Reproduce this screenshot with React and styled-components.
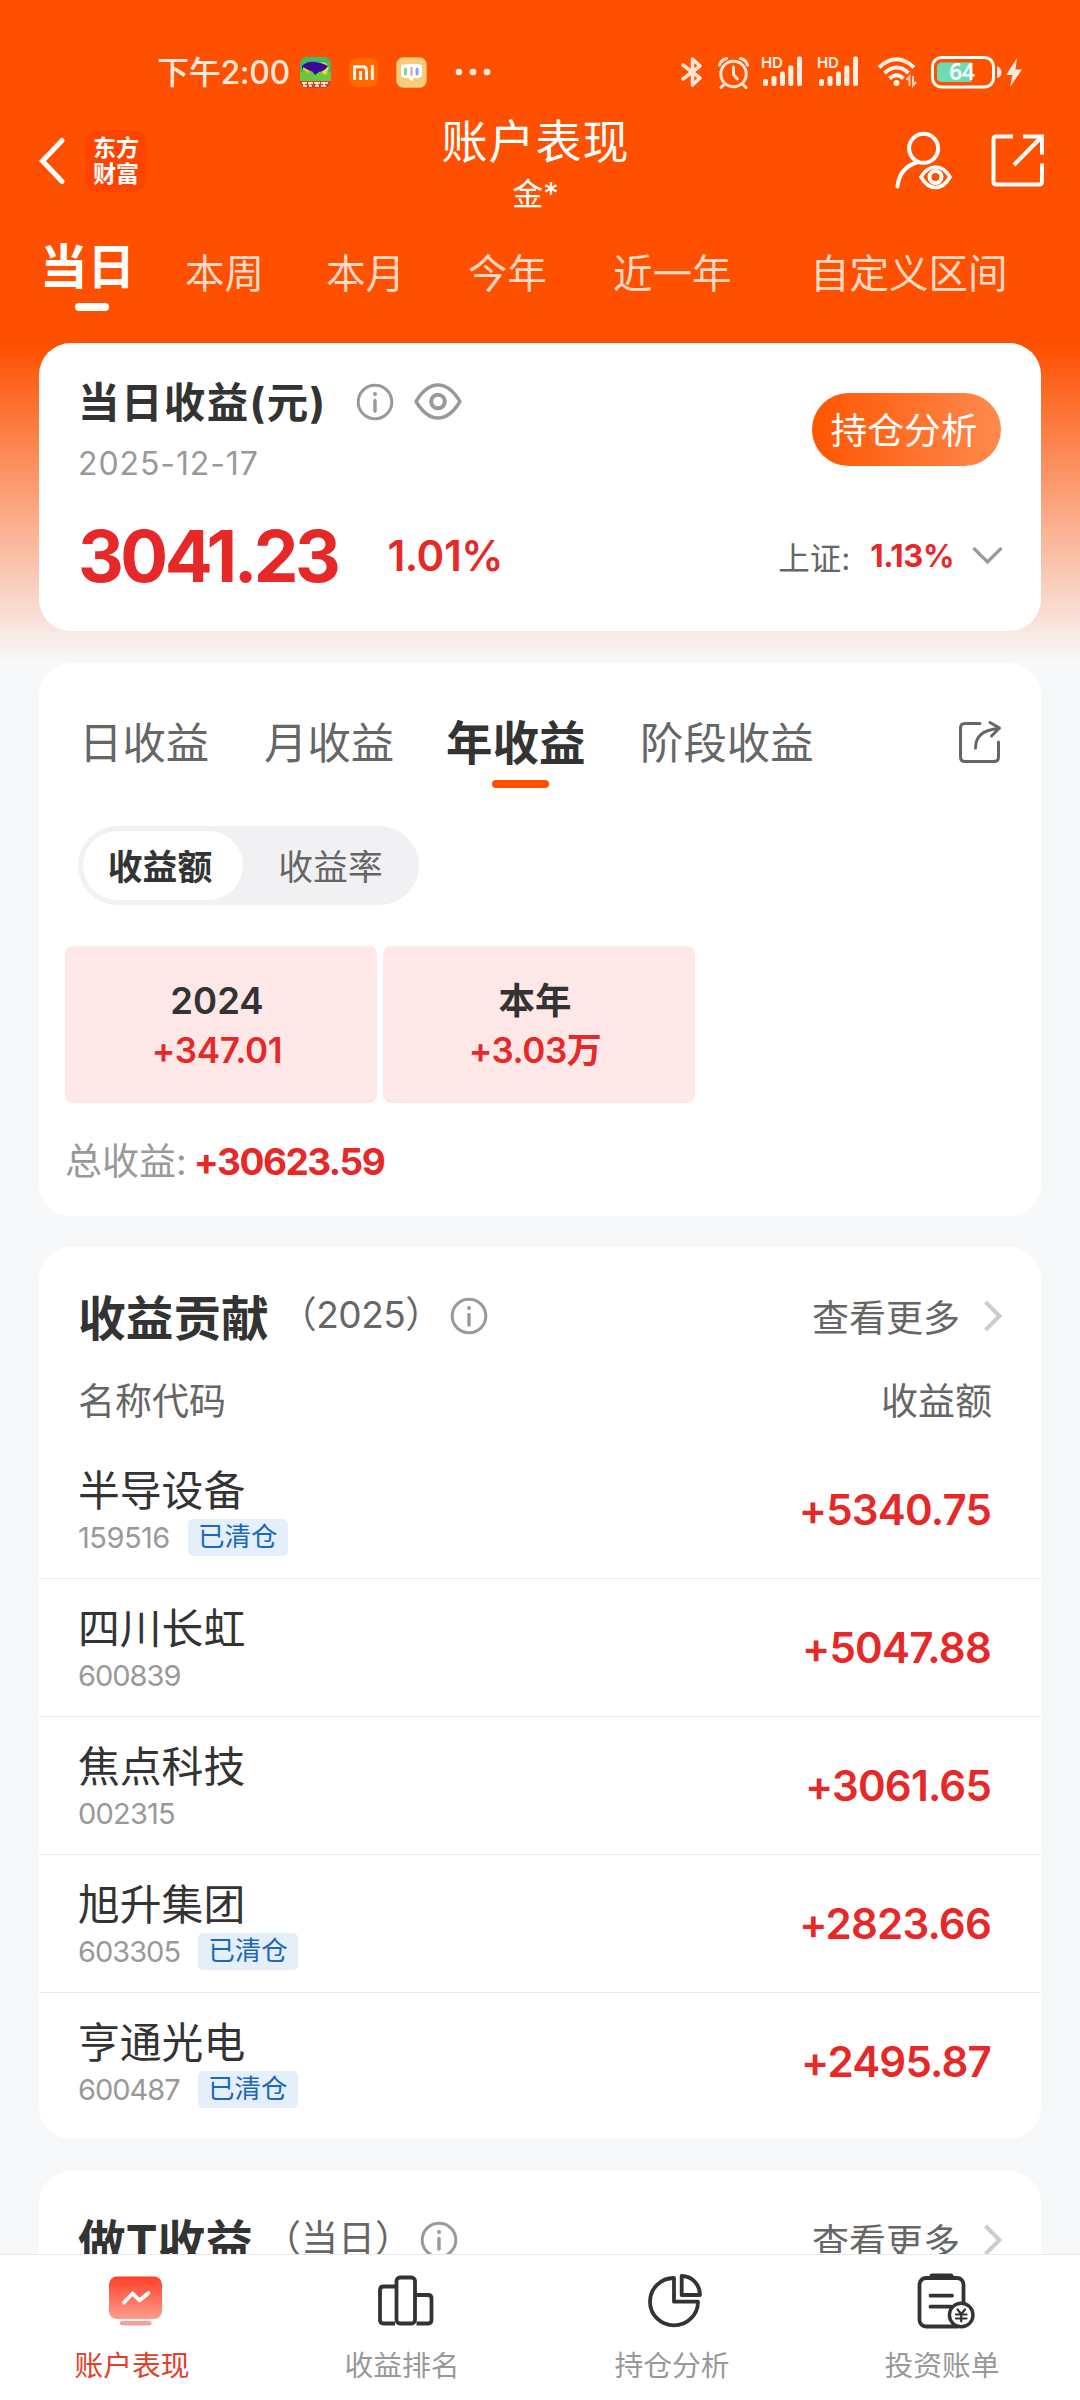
import React from "react";
import styled, { createGlobalStyle } from "styled-components";

const GlobalStyle = createGlobalStyle`
  * { box-sizing: border-box; }
  html, body { margin: 0; padding: 0; background: #f7f8fa; }
  body {
    font-family: Inter, "Noto Sans CJK SC", sans-serif;
    color: #333;
    white-space: nowrap;
  }
  svg { display: block; flex: none; }
`;

const Page = styled.div`
  width: 1080px;
  height: 2400px;
  display: flex;
  flex-direction: column;
  overflow: hidden;
  background: linear-gradient(180deg, #ff5000 345px, #f7f8fa 662px);
`;

const Scroll = styled.main`
  flex: 1;
  min-height: 0;
  overflow: hidden;
`;

/* status bar */
const StatusBar = styled.div`
  margin-top: 33px;
  height: 78px;
  padding: 0 57px 0 157px;
  display: flex;
  align-items: center;
  color: #ffe9dc;
`;
const Clock = styled.span`
  padding-top: 2px;
  font-size: 32px;
  font-weight: 500;
  line-height: 40px;
  letter-spacing: ${(p) => p.$ls || 0}px;
`;
const Notices = styled.div`
  display: flex;
  align-items: center;
  gap: 18px;
  margin-left: 10px;
`;
const Signals = styled.div`
  display: flex;
  align-items: center;
  margin-left: auto;
`;
const Gap = styled.span`
  width: ${(p) => p.$w}px;
`;

/* title bar */
const TitleBar = styled.header`
  height: 110px;
  padding: 0 35px 0 39px;
  display: grid;
  grid-template-columns: 1fr auto 1fr;
  color: #fff;
`;
const Side = styled.div`
  height: 100px;
  display: flex;
  align-items: center;
  justify-content: ${(p) => (p.$end ? "flex-end" : "flex-start")};
  gap: ${(p) => p.$gap}px;
`;
const Heading = styled.div`
  padding: 2px 13px 0 0;
  text-align: center;
`;
const Title = styled.h1`
  margin: 0;
  font-size: 46px;
  font-weight: 400;
  line-height: 56px;
  letter-spacing: 1px;
`;
const SubTitle = styled.div`
  margin-top: 3px;
  font-size: 31px;
  line-height: 44px;
`;
const Brand = styled.div`
  width: 62px;
  height: 62px;
  border-radius: 14px;
  background: #ff4400;
  display: flex;
  flex-direction: column;
  align-items: center;
  justify-content: center;
  font-size: 23px;
  font-weight: 700;
  line-height: 26px;
`;

/* period tabs */
const Periods = styled.nav`
  height: 122px;
  padding-left: 40px;
  display: grid;
  grid-template-columns: 145px 141px 142px 145px 197px auto;
  color: #ffd9c5;
`;
const Period = styled.div`
  padding-top: ${(p) => (p.$active ? 16 : 23)}px;
  font-size: ${(p) => (p.$active ? 47.5 : 39.5)}px;
  font-weight: ${(p) => (p.$active ? 700 : 400)};
  color: ${(p) => (p.$active ? "#fff" : "inherit")};
  line-height: 60px;
`;
const PeriodMark = styled.div`
  width: 34px;
  height: 8px;
  margin: 6px 0 0 35px;
  border-radius: 4px;
  background: #fff;
`;

/* cards */
const Card = styled.section`
  height: ${(p) => p.$h}px;
  margin: 0 39px ${(p) => p.$mb || 32}px;
  border-radius: 32px;
  background: #fff;
`;
const Red = styled.span`
  color: #e62828;
  font-weight: ${(p) => p.$weight || 700};
  font-size: ${(p) => p.$size}px;
  letter-spacing: ${(p) => p.$ls || 0}px;
`;
const Row = styled.div`
  display: flex;
  align-items: center;
`;
const TodayTop = styled.div`
  display: flex;
  justify-content: space-between;
  padding: 34px 40px 0 39px;
`;
const TodayTitle = styled.h2`
  margin: 0 29px 0 0;
  padding-top: 2px;
  font-size: 41.5px;
  font-weight: 700;
  line-height: 48px;
  letter-spacing: 1.4px;
`;
const DateText = styled.div`
  margin-top: 17px;
  font-size: 32px;
  line-height: 40px;
  letter-spacing: ${(p) => p.$ls}px;
  color: #999;
`;
const Pill = styled.div`
  width: 189px;
  height: 73px;
  margin-top: 16px;
  padding-right: 5px;
  border-radius: 37px;
  background: linear-gradient(90deg, #ff5500, #ff8a4f);
  color: #fff;
  font-size: 36.8px;
  line-height: 76px;
  text-align: center;
`;
const TodayFigures = styled.div`
  height: 80px;
  margin-top: 31px;
  padding: 1px 38px 0 39px;
  display: flex;
  align-items: center;
`;
const Index = styled.div`
  margin-left: auto;
  display: flex;
  align-items: center;
  font-size: 31.5px;
  color: #666;
`;

/* returns card */
const ReturnTabs = styled.div`
  height: 125px;
  padding: 0 39px 0 40px;
  display: grid;
  grid-template-columns: 185px 182px 194px 1fr auto;
`;
const ReturnTab = styled.div`
  padding-top: 52px;
  font-size: ${(p) => (p.$active ? 46.5 : 43.4)}px;
  font-weight: ${(p) => (p.$active ? 700 : 400)};
  color: ${(p) => (p.$active ? "#333" : "#666")};
  line-height: 56px;
`;
const ReturnMark = styled.div`
  width: 57px;
  height: 8px;
  margin: 9px 0 0 46px;
  border-radius: 4px;
  background: #ff5000;
`;
const ShareSlot = styled.div`
  padding-top: 57px;
`;
const Segment = styled.div`
  width: 341px;
  height: 79px;
  margin: 38px 0 0 39px;
  padding: 5px;
  border-radius: 40px;
  background: #f1f1f4;
  display: flex;
`;
const SegmentItem = styled.div`
  width: ${(p) => (p.$active ? 160 : 171)}px;
  height: 69px;
  padding: ${(p) => (p.$active ? "0 6px 0 0" : "0 0 0 4px")};
  border-radius: 35px;
  background: ${(p) => (p.$active ? "#fff" : "transparent")};
  color: ${(p) => (p.$active ? "#333" : "#666")};
  font-size: 34.8px;
  font-weight: ${(p) => (p.$active ? 700 : 400)};
  line-height: 72px;
  text-align: center;
`;
const Years = styled.div`
  display: grid;
  grid-template-columns: 312px 312px;
  gap: 6px;
  margin: 41px 0 0 26px;
`;
const Year = styled.div`
  height: 157px;
  padding: 31px 8px 0 0;
  border-radius: 8px;
  background: #fde8e7;
  text-align: center;
  line-height: 49px;
`;
const YearName = styled.div`
  font-size: 36.5px;
  font-weight: 600;
`;
const Total = styled.div`
  margin: 33px 0 0 26px;
  display: flex;
  align-items: center;
  gap: 7px;
  line-height: 52px;
  font-size: 37px;
  color: #999;
`;

/* contribution card */
const SectionHead = styled.div`
  height: 137px;
  padding: 0 38px 0 39px;
  display: flex;
  align-items: center;
`;
const SectionTitle = styled.h2`
  margin: 0;
  font-size: 47.7px;
  font-weight: 700;
`;
const SectionNote = styled.span`
  margin: 0 ${(p) => p.$mr}px 0 11px;
  font-size: 37px;
  line-height: 46px;
  padding-bottom: 2px;
  letter-spacing: ${(p) => p.$ls || 0}px;
  color: #666;
`;
const More = styled.div`
  margin-left: auto;
  display: flex;
  align-items: center;
  gap: 23px;
  color: #666;
  font-size: 37px;
`;
const ListHead = styled.div`
  height: 57px;
  padding: 1px 49px 0 39px;
  display: flex;
  align-items: flex-start;
  justify-content: space-between;
  font-size: 37px;
  line-height: 34px;
  color: #666;
`;
const Stock = styled.div`
  height: 138px;
  padding: 25px 50px 0 39px;
  display: flex;
  justify-content: space-between;
  border-bottom: ${(p) => (p.$last ? "none" : "1px solid #e9e9e9")};
`;
const StockName = styled.div`
  font-size: 41.8px;
  line-height: 50px;
`;
const StockMeta = styled.div`
  height: 38px;
  margin-top: 2px;
  display: flex;
  align-items: center;
  gap: 18px;
`;
const Code = styled.span`
  font-size: 29px;
  letter-spacing: ${(p) => p.$ls}px;
  color: #999;
`;
const Tag = styled.span`
  width: 100px;
  height: 37px;
  border-radius: 5px;
  background: #e5effa;
  color: #1b68b8;
  font-size: 26.5px;
  line-height: 34px;
  text-align: center;
`;
const Amount = styled.div`
  line-height: 88px;
`;

/* bottom navigation */
const BottomNav = styled.nav`
  height: 146px;
  border-top: 1px solid #e9e9e9;
  background: #fff;
  display: grid;
  grid-template-columns: repeat(4, 1fr);
`;
const NavItem = styled.div`
  padding-top: 15px;
  display: flex;
  flex-direction: column;
  align-items: center;
  color: ${(p) => (p.$active ? "#e2402b" : "#999")};
`;
const NavLabel = styled.div`
  margin-top: 16px;
  padding-right: 6px;
  font-size: 28.8px;
  line-height: 40px;
`;

const GameIcon = () => (
  <svg width="31" height="31" viewBox="0 0 31 31">
    <rect width="31" height="31" rx="7" fill="#3dba6c" />
    <rect y="15" width="31" height="9" fill="#68c83f" />
    <path d="M21 5l5 1 3 5-3 7-4-2z" fill="#e7d83a" />
    <path d="M2 9Q7 4 15 5T28 9Q25 14 19 15L15 18L12 14L5 13L2 12Z" fill="#3b0a9c" />
    <path d="M3 10L10 14L8 16L3 13Z" fill="#f2c52c" />
    <path d="M0 24H31Q31 31 24 31H7Q0 31 0 24Z" fill="#d8431d" />
    <path d="M2 26h5M8 26h5M14 26h6M21 26h7M3 29h4M9 29h3M15 29h4M21 29h5M4 25v4M10 25v4M17 25v4M24 25v4" stroke="#fff" strokeWidth="1.4" />
  </svg>
);
const MiIcon = () => (
  <svg width="29" height="29" viewBox="0 0 29 29">
    <rect width="29" height="29" rx="8" fill="#ff6a00" />
    <g fill="none" stroke="#fff3e6" strokeWidth="3">
      <path d="M5.5 22V8.7H14Q17.5 8.7 17.5 12.5V22" />
      <path d="M11.5 13V22M23.3 7.2V22" />
    </g>
  </svg>
);
const ChatIcon = () => (
  <svg width="31" height="31" viewBox="0 0 31 31">
    <rect x=".5" y=".5" width="30" height="30" rx="7" fill="#fbcb7c" stroke="#e2ae58" />
    <path d="M9 7H22Q26 7 26 11V17Q26 21 22 21H18L15.500 24.500L13 21H9Q5 21 5 17V11Q5 7 9 7Z" fill="#fff" />
    <g strokeWidth="3" strokeLinecap="round">
      <path d="M9.500 12V17" stroke="#8fcfa4" />
      <path d="M15.500 11V18" stroke="#dd9aa8" strokeWidth="2" />
      <path d="M21 12V17" stroke="#7fa9ee" />
    </g>
  </svg>
);
const DotsIcon = () => (
  <svg width="46" height="8" viewBox="-10 0 46 8" fill="#ffeee3">
    <circle cx="4" cy="4" r="3.300" />
    <circle cx="18" cy="4" r="3.300" />
    <circle cx="32" cy="4" r="3.300" />
  </svg>
);
const BluetoothIcon = () => (
  <svg width="24" height="32" viewBox="0 0 24 32" fill="none" stroke="#ffe4d4" strokeWidth="3.600" strokeLinejoin="round" strokeLinecap="round">
    <path d="M3 9L20 22L12.500 29V3L20 10L3 23" />
  </svg>
);
const AlarmIcon = () => (
  <svg width="33" height="33" viewBox="0 0 33 33" fill="none" stroke="#ffe4d4" strokeWidth="3" strokeLinecap="round">
    <circle cx="16.500" cy="18" r="12.700" />
    <path d="M16.500 11V18.500L20.500 23" />
    <path d="M2.500 9Q4 4 9.500 2.500M30.500 9Q29 4 23.500 2.500M7 28.500L4 31.500M26 28.500L29 31.500" />
  </svg>
);
const SignalIcon = () => (
  <svg width="42" height="44" viewBox="0 -6 42 44" fill="#ffeee3">
    <text x="0" y="12" fontFamily="Inter, sans-serif" fontSize="15" fontWeight="600" letterSpacing="-.3">HD</text>
    <rect x="2" y="23" width="5" height="7" rx="2" />
    <rect x="10.500" y="20" width="5" height="10" rx="2" />
    <rect x="19" y="15.500" width="5" height="14.500" rx="2" />
    <rect x="27.300" y="9.500" width="5" height="20.500" rx="2" />
    <rect x="36" y="0.500" width="5" height="29.500" rx="2" />
  </svg>
);
const WifiIcon = () => (
  <svg width="41" height="32" viewBox="0 0 41 32" fill="none" stroke="#ffeee3" strokeWidth="4">
    <path d="M2 11.500Q19.500 -5 37 11.500" />
    <path d="M7.500 17Q19.500 6 31.500 17" />
    <path d="M12.500 22.500Q19.500 16 26.500 22.500" />
    <circle cx="19.500" cy="27" r="3" fill="#ffeee3" stroke="none" />
    <path d="M32.500 30V20.500L29.500 24M36 20V29.500L39 26" stroke="#ffd2b8" strokeWidth="2" />
  </svg>
);
const BatteryIcon = () => (
  <svg width="92" height="34" viewBox="0 0 92 34">
    <rect x="1.500" y="2.500" width="61" height="29.500" rx="9" fill="none" stroke="#fff" strokeWidth="3" />
    <path d="M11 7.500H40.500V27H11Q6 27 6 22.500V12Q6 7.500 11 7.500Z" fill="#6fdbb5" />
    <text x="31" y="25" textAnchor="middle" fontFamily="'Noto Sans', sans-serif" fontSize="22.500" fontWeight="600" fill="#fff">64</text>
    <path d="M66 11Q70.500 13 70.500 17.500T66 23Z" fill="#ffe9dc" />
    <path d="M86 3L75 20H81.500L79 32L91 14.500H84.500Z" fill="#ffe9dc" />
  </svg>
);
const BackIcon = () => (
  <svg width="28" height="50" viewBox="0 0 28 50" fill="none" stroke="#fff" strokeWidth="5" strokeLinecap="round">
    <path d="M23 4.500L3.500 25L23 45.500" />
  </svg>
);
const AccountIcon = () => (
  <svg width="62" height="62" viewBox="0 0 62 62" fill="none" stroke="#fff" strokeWidth="4" strokeLinecap="round">
    <circle cx="30.600" cy="18.300" r="14.500" />
    <path d="M4.500 56.500Q6.500 37 25.500 32" />
    <path d="M28 47Q34 37 42.500 37T57 47Q51 57.500 42.500 57.500T28 47Z" strokeWidth="3.600" />
    <circle cx="42.500" cy="47" r="6" />
  </svg>
);
const OpenIcon = () => (
  <svg width="54" height="54" viewBox="0 0 54 54" fill="none" stroke="#fff" strokeWidth="4">
    <path d="M22 2.500H5.500Q2.500 2.500 2.500 5.500V47.500Q2.500 50.500 5.500 50.500H48Q51 50.500 51 47.500V29.500" />
    <path d="M32 2.500H51V20.500M23 31L50 3.500" />
  </svg>
);
const InfoIcon = () => (
  <svg width="38" height="38" viewBox="0 0 38 38" fill="none" stroke="#999" strokeWidth="3" strokeLinecap="round">
    <circle cx="19" cy="19" r="16.800" />
    <path d="M19 17.500V28" strokeWidth="3.400" />
    <circle cx="19" cy="11" r="2" fill="#999" stroke="none" />
  </svg>
);
const EyeIcon = () => (
  <svg width="48" height="38" viewBox="0 0 48 38" fill="none" stroke="#999" strokeWidth="3.400" strokeLinejoin="round">
    <path d="M2 18.500Q12 2 24 2T46 18.500Q36 35 24 35T2 18.500Z" />
    <circle cx="24" cy="18.500" r="6.800" strokeWidth="4" />
  </svg>
);
const DownIcon = () => (
  <svg width="31" height="19" viewBox="0 0 31 19" fill="none" stroke="#999" strokeWidth="3.200">
    <path d="M1.500 2L15.500 16L29.500 2" />
  </svg>
);
const RightIcon = () => (
  <svg width="20" height="32" viewBox="0 0 20 32" fill="none" stroke="#ccc" strokeWidth="4">
    <path d="M2.500 2L16.500 16L2.500 30" />
  </svg>
);
const ShareIcon = () => (
  <svg width="44" height="44" viewBox="0 0 44 44" fill="none" stroke="#666" strokeWidth="3" strokeLinecap="round" strokeLinejoin="round">
    <path d="M22 3.500H7Q2.500 3.500 2.500 8V37Q2.500 41.500 7 41.500H36Q40.500 41.500 40.500 37V22" />
    <path d="M17.500 28Q17.500 10 41 8.500M32 2.500L41.500 8L33.500 16" />
  </svg>
);
const PerformanceIcon = () => (
  <svg width="60" height="60" viewBox="0 0 60 60">
    <defs>
      <linearGradient id="screen" x1="0" y1="0" x2="0" y2="1">
        <stop offset="0" stopColor="#ff3f26" />
        <stop offset="1" stopColor="#ff9d8e" />
      </linearGradient>
    </defs>
    <rect x="4" y="6.500" width="53" height="42.500" rx="8" fill="url(#screen)" />
    <rect x="15" y="51" width="31.500" height="4.500" rx="2" fill="#f5a093" />
    <path d="M19 32.500L27.500 23.500L34.500 30.500L43.500 23" fill="none" stroke="#fff" strokeWidth="3.800" strokeLinecap="round" strokeLinejoin="round" />
  </svg>
);
const RankIcon = () => (
  <svg width="60" height="60" viewBox="0 0 60 60" fill="none" stroke="#333" strokeWidth="3.800">
    <path d="M20 16.500H8.500Q5 16.500 5 20V50Q5 53.500 8.500 53.500H20" />
    <rect x="21.500" y="7.500" width="18.500" height="46" rx="3.500" />
    <path d="M41.500 25H53Q56.500 25 56.500 28.500V50Q56.500 53.500 53 53.500H41.500" />
  </svg>
);
const PieIcon = () => (
  <svg width="60" height="60" viewBox="0 0 60 60" fill="none" stroke="#333" strokeWidth="3.800" strokeLinejoin="round">
    <path d="M29 8V31.700H53A24 23.700 0 1 1 29 8Z" />
    <path d="M36.700 6V25H55A18.500 19 0 0 0 36.700 6Z" />
  </svg>
);
const BillIcon = () => (
  <svg width="60" height="60" viewBox="0 0 60 60" fill="none" stroke="#333" strokeWidth="3.800" strokeLinecap="round">
    <rect x="4.500" y="8" width="44" height="48.500" rx="6.500" />
    <path d="M17 6H36" strokeWidth="5" />
    <path d="M15.500 25.700H37M15.500 36.700H36" />
    <circle cx="46.200" cy="45" r="11.800" fill="#fff" strokeWidth="3.400" />
    <path d="M42.500 39.500L46.200 44L50 39.500M46.200 44V51.500M41 44.500H51.500M41 48.500H51.500" strokeWidth="2.200" />
  </svg>
);

const stocks = [
  { name: "半导设备", code: "159516", ls: -0.5, cleared: true, amount: "+5340.75" },
  { name: "四川长虹", code: "600839", ls: -1, amount: "+5047.88" },
  { name: "焦点科技", code: "002315", ls: -0.8, amount: "+3061.65" },
  { name: "旭升集团", code: "603305", ls: -1, cleared: true, amount: "+2823.66" },
  { name: "亨通光电", code: "600487", ls: -1, cleared: true, amount: "+2495.87" },
];

const periods = ["当日", "本周", "本月", "今年", "近一年", "自定义区间"];
const returnTabs = ["日收益", "月收益", "年收益", "阶段收益"];
const navItems = [
  { label: "账户表现", Icon: PerformanceIcon, active: true },
  { label: "收益排名", Icon: RankIcon },
  { label: "持仓分析", Icon: PieIcon },
  { label: "投资账单", Icon: BillIcon },
];

function SectionHeader({ title, note, ls, mr }) {
  return (
    <SectionHead>
      <SectionTitle>{title}</SectionTitle>
      <SectionNote $ls={ls} $mr={mr}>{note}</SectionNote>
      <InfoIcon />
      <More>
        查看更多
        <RightIcon />
      </More>
    </SectionHead>
  );
}

export default function App() {
  return (
    <Page>
      <GlobalStyle />
      <Scroll>
        <StatusBar>
          <Clock $ls={-0.3}>下午2:00</Clock>
          <Notices>
            <GameIcon />
            <MiIcon />
            <ChatIcon />
            <DotsIcon />
          </Notices>
          <Signals>
            <BluetoothIcon />
            <Gap $w={13} />
            <AlarmIcon />
            <Gap $w={11} />
            <SignalIcon />
            <Gap $w={14} />
            <SignalIcon />
            <Gap $w={18} />
            <WifiIcon />
            <Gap $w={13} />
            <BatteryIcon />
          </Signals>
        </StatusBar>

        <TitleBar>
          <Side $gap={18}>
            <BackIcon />
            <Brand>
              <span>东方</span>
              <span>财富</span>
            </Brand>
          </Side>
          <Heading>
            <Title>账户表现</Title>
            <SubTitle>金*</SubTitle>
          </Heading>
          <Side $end $gap={36}>
            <AccountIcon />
            <OpenIcon />
          </Side>
        </TitleBar>

        <Periods>
          {periods.map((p, i) => (
            <Period key={p} $active={i === 0}>
              {p}
              {i === 0 && <PeriodMark />}
            </Period>
          ))}
        </Periods>

        <Card $h={288}>
          <TodayTop>
            <div>
              <Row>
                <TodayTitle>当日收益(元)</TodayTitle>
                <InfoIcon />
                <Gap $w={20} />
                <EyeIcon />
              </Row>
              <DateText $ls={0.9}>2025-12-17</DateText>
            </div>
            <Pill>持仓分析</Pill>
          </TodayTop>
          <TodayFigures>
            <Red $size={71} $ls={-3.5}>3041.23</Red>
            <Gap $w={50} />
            <Red $size={42} $weight={600} $ls={-0.4}>1.01%</Red>
            <Index>
              上证:
              <Gap $w={20} />
              <Red $size={31} $ls={-0.4}>1.13%</Red>
              <Gap $w={18} />
              <DownIcon />
            </Index>
          </TodayFigures>
        </Card>

        <Card $h={553} $mb={31}>
          <ReturnTabs>
            {returnTabs.map((t, i) => (
              <ReturnTab key={t} $active={i === 2}>
                {t}
                {i === 2 && <ReturnMark />}
              </ReturnTab>
            ))}
            <ShareSlot>
              <ShareIcon />
            </ShareSlot>
          </ReturnTabs>
          <Segment>
            <SegmentItem $active>收益额</SegmentItem>
            <SegmentItem>收益率</SegmentItem>
          </Segment>
          <Years>
            <Year>
              <YearName>2024</YearName>
              <Red $size={35} $weight={600} $ls={-0.3}>+347.01</Red>
            </Year>
            <Year>
              <YearName>本年</YearName>
              <Red $size={35} $weight={600} $ls={-0.5}>+3.03万</Red>
            </Year>
          </Years>
          <Total>
            总收益:
            <Red $size={37} $ls={-1.5}>+30623.59</Red>
          </Total>
        </Card>

        <Card $h={892}>
          <SectionHeader title="收益贡献" note="（2025）" ls={-0.5} mr={8} />
          <ListHead>
            <span>名称代码</span>
            <span>收益额</span>
          </ListHead>
          {stocks.map((s, i) => (
            <Stock key={s.code} $last={i === stocks.length - 1}>
              <div>
                <StockName>{s.name}</StockName>
                <StockMeta>
                  <Code $ls={s.ls}>{s.code}</Code>
                  {s.cleared && <Tag>已清仓</Tag>}
                </StockMeta>
              </div>
              <Amount>
                <Red $size={42} $weight={600} $ls={-0.8}>{s.amount}</Red>
              </Amount>
            </Stock>
          ))}
        </Card>

        <Card $h={400}>
          <SectionHeader title="做T收益" note="（当日）" mr={8} />
        </Card>
      </Scroll>

      <BottomNav>
        {navItems.map(({ label, Icon, active }) => (
          <NavItem key={label} $active={active}>
            <Icon />
            <NavLabel>{label}</NavLabel>
          </NavItem>
        ))}
      </BottomNav>
    </Page>
  );
}
